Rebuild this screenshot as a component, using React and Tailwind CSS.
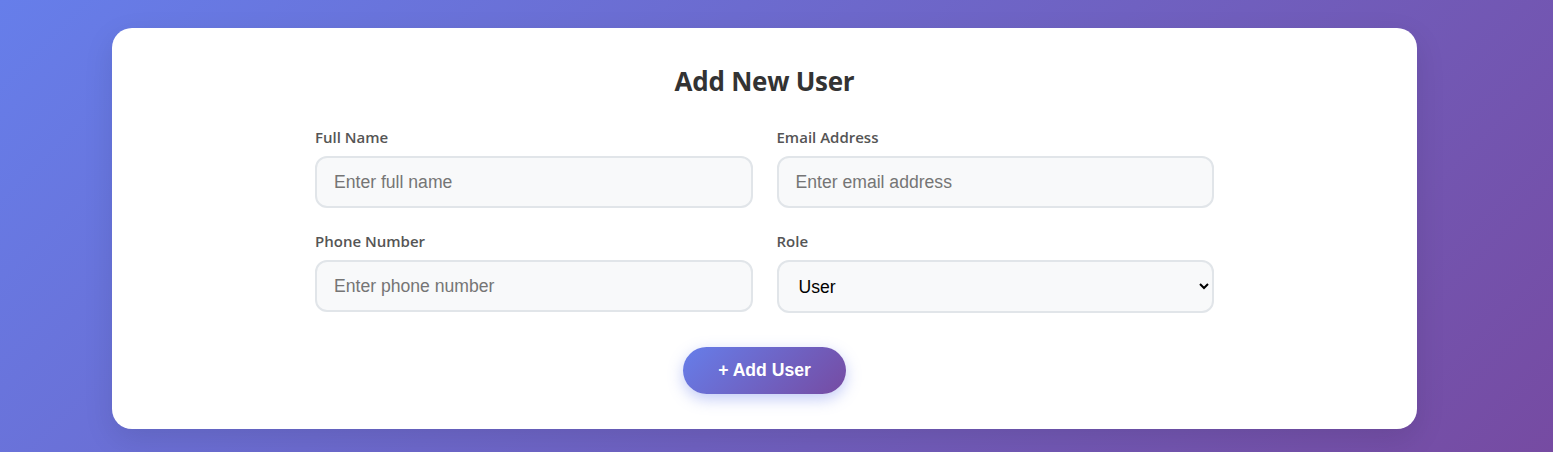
export default function App() {
  return (
    <div className="min-h-[452px] bg-[linear-gradient(135deg,#667eea_0%,#764ba2_100%)] pt-[28px] pb-[23px]">
      <div className="ml-[112px] w-[1305px] rounded-[20px] bg-white pt-[38px] pb-[35px] shadow-[0_10px_30px_rgba(0,0,0,0.1)]">
        <h2 className="mb-[30px] text-center text-[26px] leading-[31px] font-bold text-[#333] [font-family:'Open_Sans',sans-serif] tracking-[-0.25px]">
          Add New User
        </h2>
        <form className="mx-auto w-[899px]" onSubmit={(e) => e.preventDefault()}>
          <div className="grid grid-cols-2 gap-x-6 gap-y-[23px]">
            <Field label="Full Name" placeholder="Enter full name" />
            <Field label="Email Address" placeholder="Enter email address" />
            <Field label="Phone Number" placeholder="Enter phone number" />
            <div>
              <label className="mb-[9px] block text-[15px] leading-5 font-semibold text-[#555] [font-family:'Open_Sans',sans-serif]">
                Role
              </label>
              <select
                defaultValue="user"
                className="h-[53px] w-full rounded-xl border-2 border-[#e1e5e9] bg-[#f8f9fa] px-[16px] text-[17.6px] text-black [font-family:'Liberation_Sans',Arial,sans-serif]"
              >
                <option value="user">User</option>
                <option value="admin">Admin</option>
              </select>
            </div>
          </div>
          <div className="mt-[34px] flex justify-center">
            <button
              type="submit"
              className="h-[47px] w-[163px] rounded-full bg-[linear-gradient(135deg,#667eea_0%,#764ba2_100%)] text-[17.6px] font-bold text-white shadow-[0_5px_15px_rgba(102,126,234,0.4)] [font-family:'Liberation_Sans',Arial,sans-serif]"
            >
              + Add User
            </button>
          </div>
        </form>
      </div>
    </div>
  );
}

function Field({ label, placeholder }) {
  return (
    <div>
      <label className="mb-[9px] block text-[15px] leading-5 font-semibold text-[#555] [font-family:'Open_Sans',sans-serif]">
        {label}
      </label>
      <input
        type="text"
        placeholder={placeholder}
        className="h-[52px] w-full rounded-xl border-2 border-[#e1e5e9] bg-[#f8f9fa] px-[17px] text-[17.6px] text-black outline-none placeholder:text-[#757575] [font-family:'Liberation_Sans',Arial,sans-serif]"
      />
    </div>
  );
}
